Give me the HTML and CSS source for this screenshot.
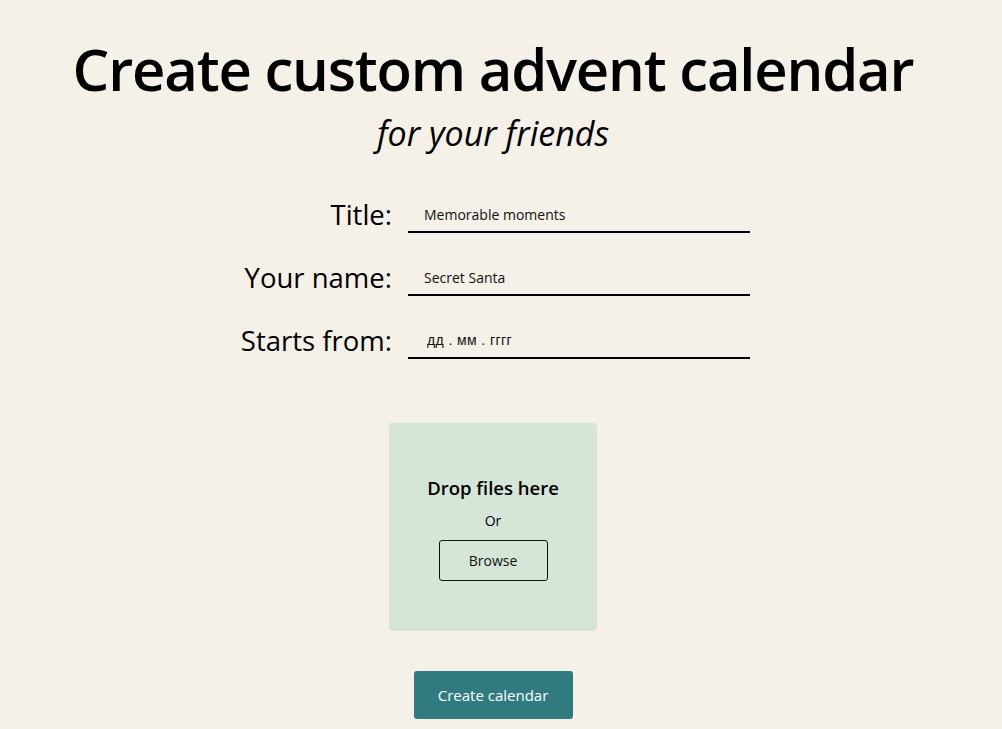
FILE: index.html
```html
<!DOCTYPE html>
<html>
<head>
<meta charset="utf-8">
<link rel="stylesheet" href="styles.css">
</head>
<body>
<main class="page">
  <h1 class="title">Create custom advent calendar</h1>
  <p class="subtitle">for your friends</p>
  <form class="form">
    <div class="row">
      <label class="label">Title:</label>
      <input class="field" type="text" value="Memorable moments">
    </div>
    <div class="row">
      <label class="label">Your name:</label>
      <input class="field" type="text" value="Secret Santa">
    </div>
    <div class="row">
      <label class="label">Starts from:</label>
      <input class="field date" type="text" value="дд . мм . гггг">
    </div>
  </form>
  <div class="drop">
    <div class="drop-title">Drop files here</div>
    <div class="drop-or">Or</div>
    <button class="browse" type="button">Browse</button>
  </div>
  <button class="create" type="button">Create calendar</button>
</main>
</body>
</html>
```
FILE: styles.css
```css
html, body {
  margin: 0;
  padding: 0;
  background: #f5f0e8;
}
body {
  font-family: "Open Sans", "Noto Sans", sans-serif;
  color: #000;
}
.page {
  display: flex;
  flex-direction: column;
  align-items: center;
  width: 986px;
}
.title {
  margin: 31px 0 0;
  font-size: 58px;
  font-weight: 600;
  line-height: 76px;
  letter-spacing: -1.2px;
}
.subtitle {
  margin: 4px 0 0;
  font-size: 34px;
  font-style: italic;
  line-height: 44px;
}
.form {
  margin-top: 34px;
  display: flex;
  flex-direction: column;
  gap: 19px;
  margin-left: -94px;
}
.row {
  display: flex;
  align-items: flex-end;
  gap: 16px;
}
.label {
  width: 250px;
  text-align: right;
  font-size: 27.5px;
  line-height: 36px;
}
.field {
  width: 342px;
  height: 44px;
  box-sizing: border-box;
  border: none;
  border-bottom: 2px solid #000;
  background: transparent;
  padding: 8px 16px 0;
  font-family: "Open Sans", sans-serif;
  font-size: 14px;
  color: #111;
  outline: none;
}
.field.date {
  font-family: "Liberation Sans", Arial, sans-serif;
  font-size: 14px;
  letter-spacing: 0.4px;
  padding-left: 19px;
}
.drop {
  margin-top: 64px;
  width: 208px;
  height: 208px;
  box-sizing: border-box;
  padding-top: 53px;
  background: #d5e5d8;
  border-radius: 4px;
  display: flex;
  flex-direction: column;
  align-items: center;
}
.drop-title {
  font-size: 18.5px;
  font-weight: 600;
  line-height: 24px;
}
.drop-or {
  margin-top: 11px;
  font-size: 14px;
  line-height: 20px;
}
.browse {
  margin-top: 9px;
  width: 109px;
  height: 41px;
  border: 1px solid #111;
  border-radius: 3px;
  background: transparent;
  font-family: "Open Sans", sans-serif;
  font-size: 14px;
  color: #111;
}
.create {
  margin-top: 40px;
  width: 159px;
  height: 48px;
  border: none;
  border-radius: 3px;
  background: #2f7b80;
  color: #fff;
  font-family: "Open Sans", sans-serif;
  font-size: 15px;
}
```
